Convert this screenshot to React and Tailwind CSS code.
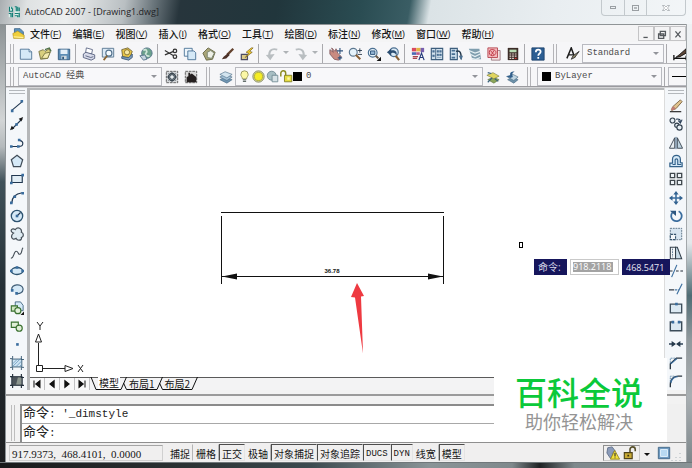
/**
 * AutoCAD style drawing window
 *
 * Title bar, menu bar, two toolbar rows, the drawing canvas with its
 * side toolbars, the command line and the status bar.
 */

import React from 'react'

const menus = ['文件(F)', '编辑(E)', '视图(V)', '插入(I)', '格式(O)', '工具(T)', '绘图(D)', '标注(N)', '修改(M)', '窗口(W)', '帮助(H)']

const toggles = [
  { name: '捕捉', on: false },
  { name: '栅格', on: false },
  { name: '正交', on: true },
  { name: '极轴', on: false },
  { name: '对象捕捉', on: true },
  { name: '对象追踪', on: true },
  { name: 'DUCS', on: true },
  { name: 'DYN', on: true },
  { name: '线宽', on: false },
  { name: '模型', on: true },
]

const navy = '#20364f'
const blue = '#3a6d9e'
const pale = '#d5e9f7'

/* All icon drawings use a 16 x 16 box */
const icons = {
  app: (
    <>
      <path d="M1 1h6v6H1zM9 1h6v14H9zM1 9h6v6H1z" fill="#d9efe9" />
      <path d="M2 1v6h4V3M5 1v3M9 1h2v6M13 1v6M15 2v5M1 10h3v5M6 9v6M9 10h5M9 13h4v2M15 9v6" stroke="#157d76" strokeWidth="1.6" fill="none" />
    </>
  ),
  dwg: (
    <>
      <path d="M3 2h7l4 4v6H3z" fill="#5d93bd" stroke="#3b6286" />
      <path d="M1 8l6-3 8 5v4H2z" fill="#f0cf3c" stroke="#a98a1e" strokeWidth=".7" />
      <path d="M2 12l12 1" stroke="#fff1a0" strokeWidth="1.5" />
    </>
  ),
  newFile: (
    <>
      <path d="M1.5 2.5h10l3 3v8.500h-13z" fill={pale} stroke="#4b7193" />
      <path d="M11.500 2.500v3h3" fill="#fff" stroke="#4b7193" />
    </>
  ),
  open: (
    <>
      <path d="M1 5l5-2 2 2 5-3 1 3-3 8-8 1z" fill="#d9cf7e" stroke="#74703f" />
      <path d="M4 13l4-6 6-1-3 7z" fill="#f4ebae" stroke="#74703f" />
      <path d="M8 3l5-2 2 4" fill="none" stroke="#4c6e46" strokeWidth="1.3" />
    </>
  ),
  save: (
    <>
      <path d="M1.5 2.500h13v12h-13z" fill="#5d8db5" stroke="#2f587d" />
      <path d="M4 3h8v5H4z" fill="#e4eff8" />
      <path d="M5 10h6v4H5z" fill="#cfd8df" />
      <path d="M6 11h2v3H6z" fill="#2f587d" />
    </>
  ),
  print: (
    <>
      <path d="M4 7l1-6 7 2-1 5z" fill="#fff" stroke="#5c6684" />
      <path d="M1.500 8l3-2 10 3v4l-4 2-9-3z" fill="#d8dbea" stroke="#535d7c" />
      <path d="M4 10l6 2 3-1" stroke="#535d7c" fill="none" />
    </>
  ),
  preview: (
    <>
      <path d="M1.500 1.500h13v10h-13z" fill="#dbe9f5" stroke="#53728d" />
      <circle cx="9" cy="7" r="3.500" fill="#f5fbff" stroke="#51708b" strokeWidth="1.300" />
      <path d="M7 10l-4 5" stroke="#8b6532" strokeWidth="2" />
    </>
  ),
  publish: (
    <>
      <path d="M2 3l7-2 5 4-3 8-8-2z" fill="#e8c546" stroke="#6f6435" />
      <circle cx="8" cy="6" r="3" fill="#f7e9a2" stroke="#816d2b" />
      <path d="M2 11l8 1 4-4v4l-4 3-8-2z" fill="#7b9cbe" stroke="#3f5975" />
    </>
  ),
  web: (
    <>
      <circle cx="9" cy="7" r="6" fill="#6ba18c" stroke="#56748a" />
      <path d="M5 4c3-3 5 1 3 3s2 4 4 3" stroke="#cfe6d9" strokeWidth="2" fill="none" />
      <path d="M1 10l6-1 2 5-4 1z" fill="#c6d4df" stroke="#56748a" />
    </>
  ),
  cut: (
    <>
      <path d="M1 4l10 6M1 9l10-4" stroke="#333" strokeWidth="1.300" />
      <circle cx="12.500" cy="4.500" r="2" fill="none" stroke="#333" strokeWidth="1.400" />
      <circle cx="12.500" cy="11" r="2" fill="none" stroke="#333" strokeWidth="1.400" />
    </>
  ),
  copyClip: (
    <>
      <path d="M1.500 1.500h9v9h-9z" fill="#eef6fc" stroke="#466f94" />
      <path d="M5.500 4.500h7l2 2v8h-9z" fill={pale} stroke="#466f94" />
    </>
  ),
  paste: (
    <>
      <path d="M1 7l6-6 8 5-3 8-7 1z" fill="#a9a578" stroke="#646342" />
      <path d="M6 6l4-2 4 3-3 6-5-1z" fill="#eef0e7" stroke="#73806b" />
    </>
  ),
  brush: (
    <>
      <path d="M14 2L7 9" stroke="#62412d" strokeWidth="2.600" />
      <path d="M8 7l2 2-4 4-5 1 2-3z" fill="#4b3027" />
    </>
  ),
  blockEdit: (
    <>
      <path d="M1.500 8.500h7v6h-7z" fill="#d9c98b" stroke="#4b4b63" strokeWidth="1.400" />
      <path d="M13 1L7 6l3 1-4 5 8-6-3-1 4-4z" fill="#f6cf28" stroke="#786222" strokeWidth=".8" />
    </>
  ),
  undo: (
    <>
      <path d="M14 3C7 1 4 5 5 11" stroke="#b9bec1" strokeWidth="2.200" fill="none" />
      <path d="M1 9l10-1-5 7z" fill="#b9bec1" />
    </>
  ),
  redo: (
    <>
      <path d="M2 3c7-2 10 2 9 8" stroke="#b9bec1" strokeWidth="2.200" fill="none" />
      <path d="M15 9L5 8l5 7z" fill="#b9bec1" />
    </>
  ),
  pan: (
    <>
      <path d="M1 3l4 3-2-5 4 4 1-3 2 5 4 4-3 4-5-1-5-6z" fill="#c98a80" stroke="#855d61" />
      <path d="M12.500 1v7M9 4.500h7M12.500 10v5M10 12.500h5" stroke="#31547d" strokeWidth="1.300" />
    </>
  ),
  zoomRt: (
    <>
      <circle cx="6" cy="6" r="4.500" fill="#e6f3fb" stroke="#5c7790" strokeWidth="1.300" />
      <path d="M9 9l5 5" stroke="#875f34" strokeWidth="2.400" />
      <path d="M11 4h5M13.500 1.500v5M11 8.500h5" stroke="#27384a" />
    </>
  ),
  zoomWin: (
    <>
      <circle cx="6.500" cy="6.500" r="5" fill="#e6f3fb" stroke="#4c7092" strokeWidth="1.300" />
      <path d="M4 4.500h5v4H4z" fill="#91b3d2" stroke="#264d75" />
      <path d="M10 10l3 3" stroke="#6a5a49" strokeWidth="2.400" />
      <path d="M16 11v5h-5z" fill="#111" />
    </>
  ),
  zoomPrev: (
    <>
      <circle cx="9" cy="6" r="5" fill="#dbeaf5" stroke="#4c7092" strokeWidth="1.300" />
      <path d="M11 10l4 5" stroke="#875f34" strokeWidth="2.400" />
      <path d="M1 6l5-4v2c5-1 7 2 6 6-1-3-3-4-6-3v3z" fill="#2b4d71" />
    </>
  ),
  props: (
    <>
      <path d="M1 1h5v4H1z" fill="#d94a5f" />
      <path d="M6 1h5v4H6z" fill="#e4b443" />
      <path d="M11 1h4v5h-4z" fill="#775fae" />
      <path d="M1 6h5v3H1z" fill="#4969b4" />
      <path d="M6 6h4v3H6z" fill="#b65b8c" />
      <path d="M2 11h6M2 13h5" stroke="#a9454e" strokeWidth="1.500" />
      <path d="M9 15l3-8 3 8M10 12h4" stroke="#253b7a" strokeWidth="1.300" fill="none" />
    </>
  ),
  designCenter: (
    <>
      <path d="M1.500 1.500h13v13h-13z" fill="#d2e1ec" stroke="#3d5e7d" strokeWidth="1.300" />
      <path d="M6.500 2v12" stroke="#3d5e7d" />
      <path d="M3 4h2v2H3zM3 9h2v2H3zM8 4h2v2H8zM11 4h2v2h-2zM8 8h2v2H8zM11 8h2v2h-2zM8 12h5" fill="#496f92" stroke="#496f92" strokeWidth=".5" />
    </>
  ),
  toolPalette: (
    <>
      <path d="M1.500 1.500h8v13h-8z" fill="#cfe0ed" stroke="#3d5e7d" strokeWidth="1.300" />
      <path d="M3 4h4M3 8h4M3 12h4" stroke="#496f92" strokeWidth="2" />
      <path d="M8 5c5-2 6 2 6 9" stroke="#25394c" strokeWidth="1.600" fill="none" />
      <path d="M11 10l3 5 2-5" fill="#4d7192" />
    </>
  ),
  sheetSet: (
    <>
      <path d="M1 2h12l2 12H5z" fill="#7f9eae" />
      <path d="M1 4l7 3 6-2M2 8l6 3 6-3M4 13l5 1 5-2" stroke="#e5eff3" strokeWidth="1.400" fill="none" />
    </>
  ),
  markup: (
    <>
      <path d="M5 4h10v11H5z" fill="#f5dfe0" stroke="#9a7880" />
      <path d="M1 1h11v11H1z" fill="#f3b8bc" stroke="#b5444e" />
      <path d="M3 4c2-2 6-1 7 1s-1 5-4 5-4-3-3-6zM4 4l4 5M8 4L5 9" stroke="#bd323f" fill="none" />
    </>
  ),
  calc: (
    <>
      <path d="M2 1h12v14H2z" fill="#3c2c28" />
      <path d="M4 3h8v3H4z" fill="#b8dcb3" />
      <path d="M4 8h2M7 8h2M10 8h2M4 10.500h2M7 10.500h2M10 10.500h2M4 13h2M7 13h2" stroke="#e5d9d0" strokeWidth="1.300" />
      <path d="M10 13h2" stroke="#dd3b37" strokeWidth="1.300" />
    </>
  ),
  help: (
    <>
      <path d="M1 1h14v14H1z" fill="#2c5e93" stroke="#1b426d" />
      <path d="M5.500 6c0-4 5.500-3.500 5.500-.5 0 2-2.700 2-2.700 4.500M8.300 11.500v2" stroke="#fff" strokeWidth="2" fill="none" />
    </>
  ),
  textStyle: (
    <>
      <path d="M1 13L6 1l4 11M3 9h6" stroke="#1c1c1c" strokeWidth="1.700" fill="none" />
      <path d="M15 5l-5 7-4 2 2-4z" fill="#8d8567" stroke="#333" />
    </>
  ),
  dimStyle: (
    <>
      <path d="M1 9v6M1 13h14M15 10v5" stroke="#111" strokeWidth="1.500" />
      <path d="M15 2L7 9l-4 3 5-1 7-4z" fill="#5e4637" stroke="#111" />
    </>
  ),
  gear: (
    <>
      <path d="M1.500 1.500h13v13h-13z" fill="#d4d7da" stroke="#555" strokeDasharray="3 1" />
      <circle cx="8" cy="8" r="4" fill="#89959f" stroke="#3e4952" strokeWidth="1.500" />
      <path d="M8 2v12M2 8h12M4 4l8 8M12 4l-8 8" stroke="#3e4952" />
      <circle cx="8" cy="8" r="2" fill="#e8edf0" />
    </>
  ),
  homeWs: (
    <>
      <path d="M1.500 1.500h13v13h-13z" fill="#d9d9d9" stroke="#555" strokeDasharray="3 1" />
      <path d="M3 14V8l2-1V3h2v2l2-1 5 4v6z" fill="#241f1f" />
    </>
  ),
  layers: (
    <>
      <path d="M1 11l6-3 8 3-6 4z" fill="#7196b3" stroke="#496983" strokeWidth=".7" />
      <path d="M1 8l6-3 8 3-6 4z" fill="#a6c3d8" stroke="#496983" strokeWidth=".7" />
      <path d="M1 5l6-3 8 3-6 4z" fill="#d3e4ef" stroke="#496983" strokeWidth=".7" />
    </>
  ),
  bulb: (
    <>
      <path d="M5.500 11C5 8 3.500 8 3.500 5.500a4.500 4.500 0 019 0C12.500 8 11 8 10.500 11z" fill="#fbf7a6" stroke="#8b8a54" />
      <path d="M6 12h4M6 14h4" stroke="#66706d" strokeWidth="1.400" />
    </>
  ),
  sun: (
    <>
      <circle cx="8" cy="8" r="7" fill="#d3d49b" stroke="#7f8357" />
      <circle cx="8" cy="8" r="5" fill="#f5ed26" stroke="#aaa92f" />
    </>
  ),
  freezeVp: (
    <>
      <circle cx="7" cy="7" r="5.500" fill="#a7bec3" stroke="#6a858e" />
      <path d="M7.500 6.500h7v8h-7z" fill="#d7e2e6" stroke="#6a858e" />
    </>
  ),
  unlock: (
    <>
      <path d="M1 8V4c0-4 6-4 6 0v4" fill="none" stroke="#8c8b22" strokeWidth="1.800" />
      <path d="M5.500 6.500h9v8h-9z" fill="#e6dd42" stroke="#77751d" />
      <path d="M9 9h3v3H9z" fill="#fff8a5" />
    </>
  ),
  layerPrev: (
    <>
      <path d="M2 11l6-3 7 3-6 4z" fill="#8ca659" stroke="#617746" strokeWidth=".7" />
      <path d="M1 6l7-3 7 4-6 3z" fill="#dfd560" stroke="#7c7d3a" strokeWidth=".7" />
      <path d="M2 3l4 1M2 14l5-5M14 13l-4-3" stroke="#38617c" strokeWidth="1.300" />
    </>
  ),
  layerState: (
    <>
      <path d="M3 11l6-3 6 3-5 4z" fill="#6d92ab" stroke="#476881" strokeWidth=".7" />
      <path d="M3 8l6-3 6 3-5 4z" fill="#bfd5e2" stroke="#476881" strokeWidth=".7" />
      <path d="M1 7l5-1c-1-3 2-5 5-4-3 1-3 3-2 6l-3 1z" fill="#315f8b" />
    </>
  ),
  /* draw toolbar */
  line: (
    <>
      <path d="M2 13L14 3" stroke={navy} strokeWidth="1.300" />
      <path d="M1 12h3v3H1zM12 1h3v3h-3z" fill={blue} />
    </>
  ),
  xline: (
    <>
      <path d="M2 14L14 2" stroke={navy} strokeWidth="1.300" />
      <path d="M0 15l2-5 3 3zM15 0l-2 5-3-3z" fill="#181818" />
      <path d="M6 7h3v3H6z" fill={blue} />
    </>
  ),
  pline: (
    <>
      <path d="M1 12h9M10 12c6 0 6-6 1-7" stroke={navy} strokeWidth="1.300" fill="none" />
      <path d="M0 10.500h3v3H0zM8 10.500h3v3H8zM9 3h3v3H9z" fill={blue} />
    </>
  ),
  polygon: <path d="M8 1.500l6.500 5-2.500 8H4l-2.500-8z" fill={pale} stroke="#404c58" strokeWidth="1.400" />,
  rect: (
    <>
      <path d="M2 4h12v8H2z" fill="#e1edf5" stroke={navy} strokeWidth="1.300" />
      <path d="M0 11h3v3H0zM13 2h3v3h-3z" fill={blue} />
    </>
  ),
  arc: (
    <>
      <path d="M2 14C2 7 7 3 14 2" stroke={navy} strokeWidth="1.400" fill="none" />
      <path d="M0 12h3v3H0zM4 5h3v3H4zM13 1h3v3h-3z" fill={blue} />
    </>
  ),
  circle: (
    <>
      <circle cx="8" cy="8" r="6.500" fill={pale} stroke="#2d5370" strokeWidth="1.500" />
      <path d="M8 8l4-4" stroke={navy} strokeWidth="1.300" />
      <path d="M6.500 6.500h3v3h-3z" fill={blue} />
    </>
  ),
  revcloud: <path d="M4 7C-1 5 2 0 6 3c3-4 8-1 7 3 3 1 3 5 0 6 1 4-5 4-6 1-5 3-7-3-3-6z" fill="#e0ecf3" stroke="#454f58" strokeWidth="1.400" />,
  spline: <path d="M1 14C5 14 4 6 7 6s2 5 5 3c2-1 1-6 3-7" stroke="#454f58" strokeWidth="1.300" fill="none" />,
  ellipse: (
    <>
      <ellipse cx="8" cy="8" rx="6.500" ry="4" fill={pale} stroke="#2d5370" strokeWidth="1.600" />
      <path d="M0 6.500h3v3H0zM13 6.500h3v3h-3zM6.500 2.500h3v3h-3z" fill={blue} />
    </>
  ),
  ellipseArc: (
    <>
      <path d="M2 9c-1-7 12-8 13-1 0 4-4 6-8 5" fill={pale} stroke="#405d76" strokeWidth="1.400" />
      <path d="M1 8h3v3H1zM6 11.500h3v3H6z" fill={blue} />
    </>
  ),
  insertBlock: (
    <>
      <path d="M6 1h6l3 4v6H6z" fill={pale} stroke="#3d627e" />
      <path d="M1.500 5.500h7v6h-7z" fill="#cfe5c0" stroke="#39702f" strokeWidth="1.300" />
      <circle cx="9" cy="11" r="3.500" fill="#e3f1db" stroke="#39702f" strokeWidth="1.300" />
      <path d="M16 12v4h-4z" fill="#111" />
    </>
  ),
  makeBlock: (
    <>
      <path d="M1.500 3.500h8v6h-8z" fill="#e0eed7" stroke="#39702f" strokeWidth="1.300" />
      <circle cx="10.500" cy="10.500" r="3.500" fill="#e0eed7" stroke="#39702f" strokeWidth="1.300" />
    </>
  ),
  point: <path d="M7 7h3v3H7z" fill={blue} />,
  hatch: (
    <>
      <path d="M2.500 3.500h11v9h-11z" fill="#cfe5f4" stroke="#31536d" />
      <path d="M3 9l5-5M3 12l9-9M7 12l6-6M11 12l2-2" stroke="#568bb3" strokeWidth=".8" />
      <path d="M0 3h3M3 0v3M13 0v4h3M0 13h3v3M13 16v-3h3" stroke="#31536d" fill="none" />
    </>
  ),
  gradient: (
    <>
      <path d="M2 3h12v10H2z" fill="#4c555c" stroke="#222f3b" />
      <path d="M9 4h4v8H7z" fill="#8b9690" />
      <path d="M0 3h3M3 0v3M13 0v4h3M0 13h3v3M13 16v-3h3" stroke="#222f3b" fill="none" strokeWidth="1.300" />
    </>
  ),
  /* modify toolbar */
  erase: (
    <>
      <path d="M13 1l2 2-7 8-5 2 1-4z" fill="#e0c38e" stroke="#77603e" />
      <path d="M5 8l3 3-4 2-2-1z" fill="#c07f74" />
      <path d="M1 14.500h13" stroke="#222" strokeWidth="1.300" />
    </>
  ),
  copy: (
    <>
      <circle cx="4" cy="4" r="2.800" fill="#e8f0f5" stroke="#33414e" strokeWidth="1.300" />
      <circle cx="9" cy="9.500" r="2.500" fill="#e8f0f5" stroke="#33414e" strokeWidth="1.300" />
      <circle cx="12" cy="12" r="3" fill="#e8f0f5" stroke="#33414e" strokeWidth="1.300" />
      <path d="M8 2.500c4-1 5 1 5 3M10.500 4l2.500 3 2-4" stroke={navy} strokeWidth="1.200" fill="none" />
    </>
  ),
  mirror: (
    <>
      <path d="M6.500 2v12H.5z" fill="#e8eff3" stroke="#333f4a" />
      <path d="M9.500 2v12h6z" fill="#bdd3e0" stroke="#333f4a" />
      <path d="M8 1v14" stroke="#355d80" />
    </>
  ),
  offset: (
    <>
      <path d="M1 14.500v-4h3V6c0-6 9-6 9 0v4h2v4.500z" fill={pale} stroke="#336189" strokeWidth="1.400" />
      <path d="M4 12h3V7c0-2 3-2 3 0v5h4" fill="none" stroke="#336189" strokeWidth="1.300" />
    </>
  ),
  array: <path d="M1.500 1.500h5v5h-5zM9.500 1.500h5v5h-5zM1.500 9.500h5v5h-5zM9.500 9.500h5v5h-5z" fill="#eef4f8" stroke="#3f474d" strokeWidth="1.500" />,
  move: (
    <>
      <path d="M8 2v12M2 8h12" stroke={blue} strokeWidth="1.800" />
      <path d="M8 0l3 4H5zM8 16l3-4H5zM0 8l4-3v6zM16 8l-4-3v6z" fill="#326290" />
    </>
  ),
  rotate: (
    <>
      <path d="M4 4a6 6 0 107-1.500" stroke={blue} strokeWidth="2" fill="none" />
      <path d="M1 2h7v6z" fill="#2d5780" />
    </>
  ),
  scale: (
    <>
      <path d="M1.500 1.500h13v13h-13z" fill="#d6e5f0" stroke="#536b7f" strokeDasharray="2 1" />
      <path d="M1.500 8.500h6v6h-6z" fill="#f4f8fb" stroke="#34536c" strokeWidth="1.300" strokeDasharray="3 1" />
    </>
  ),
  stretch: (
    <>
      <path d="M1.500 1.500h6v13h-6z" fill="#f3f6f8" stroke="#333f4a" strokeWidth="1.200" />
      <path d="M7.500 1.500l2 0 5 13h-7z" fill="#c9dce8" stroke="#333f4a" strokeWidth="1.200" />
      <path d="M4 3v10" stroke="#57748b" strokeDasharray="2 1" />
    </>
  ),
  trim: (
    <>
      <path d="M9 1L3 15" stroke={blue} strokeWidth="1.300" />
      <path d="M0 8h4M8 8h3M13 8h3" stroke="#222c38" strokeWidth="1.300" />
    </>
  ),
  extend: (
    <>
      <path d="M15 2L9 14" stroke={blue} strokeWidth="1.300" />
      <path d="M0 9h6" stroke="#222c38" strokeWidth="1.300" />
      <path d="M7 9h4" stroke={blue} strokeWidth="1.300" strokeDasharray="2 1" />
    </>
  ),
  breakPoint: (
    <>
      <path d="M1.500 3.500h13v10h-13z" fill="#dce9f2" stroke="#3c4c59" strokeWidth="1.500" />
      <path d="M7 2h3v3H7z" fill={blue} />
    </>
  ),
  breakGap: (
    <>
      <path d="M5 3.500H1.500v10h13v-10H11" fill="#dce9f2" stroke="#3c4c59" strokeWidth="1.600" />
      <path d="M3 2h3v3H3zM10 2h3v3h-3z" fill={blue} />
    </>
  ),
  join: (
    <>
      <path d="M0 8h6M10 8h6" stroke="#2e4357" strokeWidth="1.500" />
      <path d="M3 4.500L8 8l-5 3.500zM13 4.500L8 8l5 3.500z" fill="#26394b" />
    </>
  ),
  chamfer: (
    <>
      <path d="M1.500 15V9l7-6.500H15" stroke="#28343f" strokeWidth="1.500" fill="none" />
      <path d="M1.500 8V2.500H8" stroke="#5a86a8" strokeDasharray="2 1" fill="none" />
      <path d="M2 9l7-6" stroke={blue} strokeWidth="1.500" />
    </>
  ),
  fillet: (
    <>
      <path d="M1.500 15v-3c0-7 5-9.500 9-9.500H15" stroke="#28343f" strokeWidth="1.500" fill="none" />
      <path d="M1.500 9V2.500H7" stroke="#5a86a8" strokeDasharray="2 1" fill="none" />
      <path d="M2 10c1-4 4-7 8-7" stroke={blue} strokeWidth="1.500" fill="none" />
    </>
  ),
  /* status tray */
  tray: (
    <>
      <path d="M2 2l5-1 3 4-3 4 3 4-5 1-4-6z" fill="#8b9bb9" stroke="#5f6e88" />
      <path d="M10 5l5.500 10H5z" fill="#f4e13a" stroke="#8e801b" />
      <path d="M10.300 8v4M10.300 13v1" stroke="#333" strokeWidth="1.300" />
    </>
  ),
  padlock: (
    <>
      <path d="M8 7V4c0-4 6-4 6 0v2" fill="none" stroke="#57502b" strokeWidth="1.800" />
      <path d="M1.500 7.500h9v7h-9z" fill="#c9ab35" stroke="#4e431a" strokeWidth="1.300" />
      <path d="M5 10h2v2H5z" fill="#3b320f" />
    </>
  ),
  cleanScreen: (
    <>
      <path d="M1.500 1.500h13v13h-13z" fill="#6f9ac1" stroke="#3f6385" />
      <path d="M4 4h8v8H4z" fill="#b9d9f2" stroke="#e6f4fd" />
    </>
  ),
}

const drawTools = ['line', 'xline', 'pline', 'polygon', 'rect', 'arc', 'circle', 'revcloud', 'spline', 'ellipse', 'ellipseArc', 'insertBlock', 'makeBlock', 'point', 'hatch', 'gradient']
const modifyTools = ['erase', 'copy', 'mirror', 'offset', 'array', 'move', 'rotate', 'scale', 'stretch', 'trim', 'extend', 'breakPoint', 'breakGap', 'join', 'chamfer', 'fillet']

const Icon = ({ name, className = 'w-[14px] h-[14px]' }) => (
  <svg viewBox="0 0 16 16" className={`${className} shrink-0`} aria-hidden="true">
    {icons[name]}
  </svg>
)

const Tool = ({ name }) => (
  <button aria-label={name} className="w-[19px] h-[19px] shrink-0 flex items-center justify-center">
    <Icon name={name} />
  </button>
)

const Tools = ({ names }) => names.map((name) => <Tool key={name} name={name} />)

const Sep = () => <span className="w-px h-[19px] mr-[3px] ml-[2px] bg-[#a9a9ad] shrink-0" />

const Grip = ({ className = 'mx-[6px]' }) => <span className={`w-1 h-[19px] border-x border-[#b4b4b8] shrink-0 ${className}`} />

const Caret = ({ className = '' }) => (
  <svg viewBox="0 0 6 3" className={`w-[6px] h-[3px] shrink-0 ${className}`} aria-hidden="true">
    <path d="M0 0h6L3 3z" fill="currentColor" />
  </svg>
)

/* Select with an optional row of icons in front of the value */
const Combo = ({ label, value, className, children }) => (
  <div className={`relative flex items-center h-[19px] border border-[#b9bac0] bg-[#f8f8fa] ${className}`}>
    {children}
    <select
      aria-label={label}
      defaultValue={value}
      className="appearance-none min-w-0 flex-1 h-full px-1 font-['Liberation_Mono','Noto_Sans_CJK_SC',monospace] text-[9px] text-[#4c4c4c] bg-transparent outline-none"
    >
      <option>{value}</option>
    </select>
    <Caret className="absolute right-1 text-[#92949a] pointer-events-none" />
  </div>
)

const TitleBar = () => (
  <header className="h-6 pl-2 flex items-center gap-[5px] bg-[linear-gradient(100deg,#a9aeb1_0%,#dfe2e3_4%,#eceeee_10%,#b9bfc2_18%,#6d787e_22%,#27353c_26%,#21363c_40%,#2a4c52_52%,#3a5d64_59%,#dbe3e6_62%,#e9eef1_80%,#f3f6f8_100%)]">
    <Icon name="app" className="w-3 h-3" />
    <h1 className="flex-1 font-['Open_Sans',sans-serif] text-[9px] text-[#1f2326]">AutoCAD 2007 - [Drawing1.dwg]</h1>
    <div className="self-start h-4 mr-[6px] flex border border-t-0 border-[#c3c9cd] rounded-b-sm text-[#9a9fa3]">
      <button aria-label="最小化" className="w-[23px] flex items-center justify-center border-r border-[#c3c9cd]">
        <span className="w-[6px] h-[3px] border border-[#9a9fa3]" />
      </button>
      <button aria-label="最大化" className="w-[22px] flex items-center justify-center border-r border-[#c3c9cd]">
        <span className="w-[7px] h-[6px] border border-[#9a9fa3] flex items-center justify-center">
          <span className="w-[3px] h-[2px] bg-[#b5babd]" />
        </span>
      </button>
      <button aria-label="关闭" className="w-[38px] flex items-center justify-center">
        <svg viewBox="0 0 8 6" className="w-2 h-[6px]">
          <path d="M.5.500h2L4 2l1.500-1.500h2L5.500 3l2 2.500h-2L4 4 2.500 5.500h-2l2-2.500z" fill="#fff" stroke="currentColor" strokeWidth=".7" />
        </svg>
      </button>
    </div>
  </header>
)

const MenuBar = () => (
  <nav className="h-[18px] pl-[6px] flex items-center bg-[#f4f4f5] border-t border-[#8f9496]">
    <Icon name="dwg" className="w-[13px] h-[13px]" />
    <div className="flex-1 pl-[5px] flex gap-[11px]">
      {menus.map((menu) => (
        <button key={menu} className="flex items-center whitespace-nowrap leading-4 text-[10px] font-medium text-[#161616]">
          {menu.slice(0, 2)}
          <span className="font-['Liberation_Sans',sans-serif] text-[9px] font-normal">
            (<u>{menu[3]}</u>)
          </span>
        </button>
      ))}
    </div>
    <div className="flex text-[#55595d]">
      {['M4 11h5', 'M5 4h6v5H5zM3 7h6v5H3z', 'M4 4l6 7M10 4l-6 7'].map((d) => (
        <button key={d} aria-label="文档窗口" className="w-4 h-[15px] border border-[#c4c4c6] flex items-center justify-center">
          <svg viewBox="0 0 14 14" className="w-3 h-3">
            <path d={d} fill="none" stroke="currentColor" strokeWidth="1.500" />
          </svg>
        </button>
      ))}
    </div>
  </nav>
)

const StandardBar = () => (
  <div className="h-[22px] flex items-end overflow-hidden bg-[#f6f6f8] border-b border-[#b4b4b8]">
    <Grip className="ml-1 mr-[2px]" />
    <Tools names={['newFile', 'open', 'save']} />
    <Sep />
    <Tools names={['print', 'preview', 'publish', 'web']} />
    <Sep />
    <Tools names={['cut', 'copyClip', 'paste', 'brush', 'blockEdit']} />
    <Sep />
    <Tool name="undo" />
    <Caret className="mx-[2px] self-center text-[#aeb2b5]" />
    <Tool name="redo" />
    <Caret className="mx-[2px] self-center text-[#aeb2b5]" />
    <Sep />
    <Tools names={['pan', 'zoomRt', 'zoomWin', 'zoomPrev']} />
    <Sep />
    <Tools names={['props', 'designCenter', 'toolPalette', 'sheetSet', 'markup', 'calc']} />
    <Sep />
    <Tool name="help" />
    <Grip />
    <Tool name="textStyle" />
    <Combo label="文字样式" value="Standard" className="w-[82px] shrink-0" />
    <Sep />
    <Tool name="dimStyle" />
  </div>
)

const LayerBar = () => (
  <div className="h-[23px] flex items-end overflow-hidden bg-[#f6f6f8] border-b border-[#9b9b9f]">
    <Grip className="mx-1" />
    <Combo label="工作空间" value="AutoCAD 经典" className="w-[144px] shrink-0" />
    <Tools names={['gear', 'homeWs']} />
    <Grip />
    <Tool name="layers" />
    <Combo label="图层" value="0" className="flex-1 pl-[2px]">
      <div className="flex gap-px">
        {['bulb', 'sun', 'freezeVp', 'unlock'].map((name) => (
          <Icon key={name} name={name} className="w-[13px] h-[13px]" />
        ))}
      </div>
      <span className="w-[9px] h-[9px] bg-black" />
    </Combo>
    <Tools names={['layerPrev', 'layerState']} />
    <Grip />
    <Combo label="颜色" value="ByLayer" className="w-[125px] pl-1 shrink-0">
      <span className="w-[9px] h-[9px] bg-black" />
    </Combo>
    <Sep />
    <button aria-label="线型" className="w-[18px] h-[19px] border border-r-0 border-[#b9bac0] flex items-center pl-[3px] shrink-0">
      <span className="w-full h-px bg-black" />
    </button>
  </div>
)

const SideBar = ({ names }) => (
  <div className="w-[21px] shrink-0 flex flex-col items-center pt-[2px] bg-[#f4f7fa]">
    <span className="w-4 h-1 mb-[3px] border-y border-[#b4b8bc] shrink-0" />
    <div className="flex-1 flex flex-col">
      {names.map((name) => (
        <button key={name} aria-label={name} className="flex-1 flex items-center justify-center">
          <Icon name={name} />
        </button>
      ))}
    </div>
  </div>
)

const Canvas = () => (
  <div className="relative flex-1 bg-white">
    {/* Drawn geometry: line with its dimension */}
    <svg viewBox="0 0 226 160" className="absolute left-[190px] top-[117px] w-[226px] h-[160px]">
      <path d="M1 5.500h223M1.500 9v68M223.500 9v68M1 69.500h223" stroke="#111" fill="none" />
      <path d="M2 69.500l15-3v6zM223 69.500l-15-3v6z" fill="#111" />
      <text x="112" y="66" textAnchor="middle" fontSize="6" fontWeight="700" fontFamily="Liberation Sans, sans-serif" fill="#111">36.78</text>
      <path d="M137 76l7 13-3 .5 2 57-8-56-4-.5z" fill="#ee3a41" />
    </svg>

    {/* UCS icon */}
    <svg viewBox="0 0 56 56" className="absolute left-[4px] bottom-0 w-[56px] h-[56px]">
      <path d="M2.500 44.500h6v6h-6zM4.500 44V22M9 47.500h22M4.500 13l3 8h-6zM39 47.500l-8-3v6zM3 1l3 4 3-4M6 5v4M44 44l5 7M49 44l-5 7" fill="none" stroke="#222" />
    </svg>

    <span className="absolute left-[489px] top-[152px] w-1 h-[6px] border border-black" />

    {/* Dynamic input */}
    <div className="absolute left-[504px] top-[169px] z-10 flex gap-[3px] font-['Open_Sans','Noto_Sans_CJK_SC',sans-serif] text-[9px]">
      <label htmlFor="dyn-x" className="w-[33px] h-4 px-1 leading-4 text-[10px] whitespace-nowrap bg-[#16165c] text-[#d9d9ea]">命令:</label>
      <div className="w-[49px] h-4 p-[2px] bg-white border border-[#c9c9c9]">
        <input id="dyn-x" defaultValue="918.2118" className="block w-10 h-[10px] bg-[#a3a3a3] text-white outline-none" />
      </div>
      <input aria-label="Y" defaultValue="468.5471" className="w-12 h-4 px-1 bg-[#16165c] text-[#e6e6f2] outline-none" />
    </div>
  </div>
)

const LayoutTabs = () => (
  <div className="h-[13px] flex items-stretch bg-[#f3f3f4] border-t border-[#5a5a5a]">
    {['M4 3v8M11 3L6 7l5 4z', 'M10 3L5 7l5 4z', 'M5 3l5 4-5 4z', 'M4 3l5 4-5 4zM11 3v8'].map((d) => (
      <button key={d} aria-label="滚动布局" className="w-[15px] flex items-center justify-center border-r border-[#c2c2c4] bg-[#f8f8f9]">
        <svg viewBox="0 0 15 14" className="w-[15px] h-3">
          <path d={d} fill="#111" stroke="#111" strokeWidth="1.200" />
        </svg>
      </button>
    ))}
    {['模型', '布局1', '布局2'].map((tab, i) => (
      <React.Fragment key={tab}>
        <svg viewBox="0 0 8 13" className="w-2 h-[13px] -mt-px shrink-0">
          <path d={i === 0 ? 'M1 0l5 12.500h2' : 'M0 12.500h1L6.500 0M3.500 6L6.500 12.500H8'} fill="none" stroke="#111" />
        </svg>
        <button className={`px-px leading-3 text-[10px] text-[#151515] whitespace-nowrap border-b border-[#111] ${i === 0 ? 'bg-white -mt-px' : ''}`}>{tab}</button>
      </React.Fragment>
    ))}
    <svg viewBox="0 0 8 13" className="w-2 h-[13px] -mt-px shrink-0">
      <path d="M0 12.500h1L6.500 0" fill="none" stroke="#111" />
    </svg>
  </div>
)

const CommandLine = () => (
  <div className="h-[48px] pt-[8px] flex bg-[#f2f2f2] border-t-2 border-[#9a9a9a]">
    <span className="w-1 mx-[5px] my-px border-x border-[#bdbdbd]" />
    <div className="flex-1 bg-white border-t-2 border-l-2 border-[#8b8b8b] font-['Liberation_Mono','Noto_Sans_CJK_SC',monospace] text-[11px] leading-[16px] text-[#222]">
      <p className="h-[18px] pl-px border-b border-[#a8a8a8] whitespace-pre">
        <span className="text-[13px]">命令</span>: '_dimstyle
      </p>
      <div className="h-[18px] pl-px flex">
        <label htmlFor="command" className="leading-[18px]">
          <span className="text-[13px]">命令</span>:
        </label>
        <input id="command" className="w-40 outline-none" />
      </div>
    </div>
    <span className="w-[21px] bg-[#f0f0f0]" />
  </div>
)

const StatusBar = () => (
  <footer className="h-[20px] pl-[3px] pr-[5px] flex items-center bg-[#f0efef] border-t border-[#8f8f8f] text-[10px] text-[#151515]">
    <output className="w-[154px] h-4 px-[2px] leading-4 shrink-0 border border-[#d0d0d0] border-t-[#a5a5a5] font-['Liberation_Serif',serif] text-[11px] whitespace-pre">917.9373,  468.4101,  0.0000</output>
    <div className="flex-1 pl-1 flex">
      {toggles.map(({ name, on }) => (
        <button
          key={name}
          aria-pressed={on}
          className={`h-[17px] px-[2px] pt-[2px] leading-[14px] whitespace-nowrap border ${/[A-Z]/.test(name) ? "font-['Liberation_Mono',monospace] text-[9px]" : 'text-[10px]'} ${on ? 'border-[#4d4d4d] border-b-[#e4e4e4] border-r-[#e4e4e4]' : 'border-transparent border-r-[#b5b5b5]'}`}
        >
          {name}
        </button>
      ))}
    </div>
    <div className="h-4 px-[2px] mr-1 flex items-center gap-[3px] border border-[#c9c9c9] border-t-[#8f8f8f] border-l-[#8f8f8f]">
      <Icon name="tray" />
      <Icon name="padlock" />
    </div>
    <Caret className="mr-[7px] mt-1 text-[#111]" />
    <Icon name="cleanScreen" />
    <svg viewBox="0 0 10 10" className="w-[10px] h-[10px] self-end">
      <path d="M9 1v1M9 5v1M5 5v1M9 8v1M5 8v1M1 8v1" stroke="#aab4bb" />
    </svg>
  </footer>
)

const App = () => {
  return (
    <div className="min-h-screen flex flex-col font-['Noto_Sans_CJK_SC',sans-serif] bg-[#2b3338]">
      <TitleBar />
      <div className="flex-1 flex">
        {/* Glass frame, left */}
        <div className="w-[6px] shrink-0 border-r border-[#8d9396] bg-[linear-gradient(180deg,#8c9294_0%,#d2d5d6_22%,#b5babc_28%,#40525a_36%,#263137_60%,#1d1e20_100%)]" />
        <main className="relative flex-1 min-w-0 flex flex-col bg-[#f2f2f2]">
          <MenuBar />
          <StandardBar />
          <LayerBar />
          <div className="flex-1 flex border-t border-[#d5d5d7]">
            <SideBar names={drawTools} />
            <div className="flex-1 flex flex-col border-l-[3px] border-t-2 border-[#b5b7b9]">
              <Canvas />
              <LayoutTabs />
            </div>
            <div className="w-px bg-[#dcdcdc]" />
            <SideBar names={modifyTools} />
          </div>
          <div className="h-1" />
          <CommandLine />
          <StatusBar />

          {/* Site badge laid over the lower right corner */}
          <div className="absolute right-[19px] bottom-[20px] w-[173px] h-[84px] pt-[14px] pr-[3px] flex flex-col items-center bg-white">
            <strong className="text-[32px] leading-[38px] font-medium text-[#0bc93a]">百科全说</strong>
            <span className="text-[18px] leading-[22px] text-[#949494]">助你轻松解决</span>
          </div>
        </main>
        {/* Glass frame, right */}
        <div className="w-[6px] shrink-0 border-l border-[#a3a8ab] bg-[linear-gradient(180deg,#eef1f3_0%,#e3e8eb_50%,#4f6c74_62%,#90999d_72%,#a9afb2_85%,#7e878b_100%)]" />
      </div>
      <div className="h-[6px] border-t border-[#70777a] bg-[linear-gradient(90deg,#191a1b_0%,#2c3335_28%,#3c4b50_45%,#8a9497_62%,#7f898c_74%,#1f2224_78%,#7f898c_83%,#8a9396_100%)]" />
    </div>
  )
}

export default App
